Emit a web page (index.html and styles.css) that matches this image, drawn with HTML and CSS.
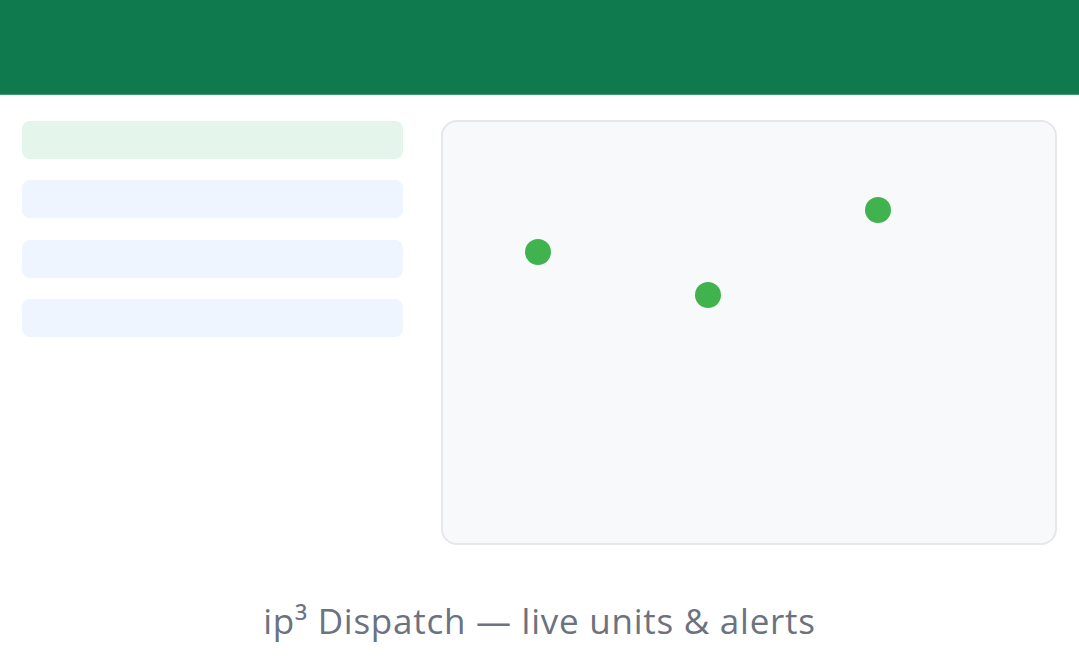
FILE: index.html
```html
<!DOCTYPE html>
<html lang="en">
<head>
    <meta charset="UTF-8">
    <meta name="viewport" content="width=device-width, initial-scale=1.0">
    <title>ip³ Dispatch</title>
    <link rel="stylesheet" href="styles.css">
</head>
<body>
    <div class="header"></div>

    <div class="main">
        <div class="unit-list">
            <div class="unit-row active"></div>
            <div class="unit-row"></div>
            <div class="unit-row"></div>
            <div class="unit-row"></div>
        </div>

        <div class="map">
            <span class="pin pin-a"></span>
            <span class="pin pin-b"></span>
            <span class="pin pin-c"></span>
        </div>
    </div>

    <div class="caption">ip³ Dispatch — live units &amp; alerts</div>
</body>
</html>
```

FILE: styles.css
```css
* {
    margin: 0;
    padding: 0;
    box-sizing: border-box;
}

body {
    font-family: "Open Sans", "Liberation Sans", sans-serif;
    background: #ffffff;
    width: 1079px;
    height: 664px;
    overflow: hidden;
}

.header {
    height: 95px;
    background: #0f7a4e;
    border-bottom: 1px solid #3f9a70;
}

.main {
    display: grid;
    grid-template-columns: 381px 1fr;
    gap: 38px;
    padding: 25px 22px 0 22px;
}

.unit-list {
    display: flex;
    flex-direction: column;
    gap: 21.3px;
    padding-top: 1px;
}

.unit-row {
    height: 38px;
    border-radius: 8px;
    background: #eef5fe;
}

.unit-row.active {
    background: #e4f5eb;
}

.map {
    position: relative;
    height: 425px;
    background: #f8f9fb;
    border: 2px solid #e6e7eb;
    border-radius: 16px;
}

.pin {
    position: absolute;
    width: 26px;
    height: 26px;
    margin: -13px 0 0 -13px;
    border-radius: 50%;
    background: #40b34e;
}

.pin-a {
    left: 95px;
    top: 130px;
}

.pin-b {
    left: 265px;
    top: 173px;
}

.pin-c {
    left: 435px;
    top: 88px;
}

.caption {
    text-align: center;
    margin-top: 52px;
    font-size: 35px;
    color: #6b7280;
    letter-spacing: 0.75px;
}
```
